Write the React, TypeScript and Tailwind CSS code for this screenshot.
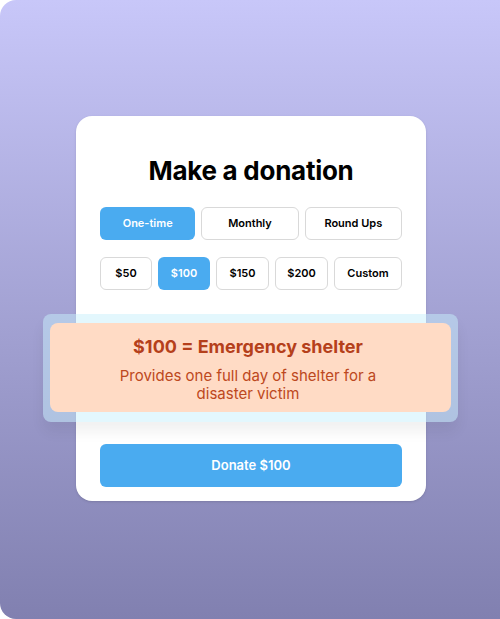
const frequencies = ["One-time", "Monthly", "Round Ups"];
const amounts = [
  { label: "$50", w: "w-[52px]" },
  { label: "$100", w: "w-[52px]" },
  { label: "$150", w: "w-[53px]" },
  { label: "$200", w: "w-[53px]" },
  { label: "Custom", w: "flex-1" },
];

export default function App() {
  return (
    <div className="relative h-[619px] w-[500px] overflow-hidden bg-white font-['Inter','Noto_Sans',sans-serif]">
      <div className="h-full w-[540px] rounded-2xl bg-gradient-to-b from-[#c8c7f9] to-[#8180b0] pt-[116px] pl-[76px]">
        <div className="flex h-[385px] w-[350px] flex-col rounded-2xl bg-white px-6 pt-[38px] shadow-sm">
          <h1 className="text-center text-[26px] font-bold leading-[33px] tracking-[-0.01em] text-black">
            Make a donation
          </h1>
          <div className="mt-[20px] flex gap-[6px]">
            {frequencies.map((f, i) => (
              <button
                key={f}
                className={
                  i === 0
                    ? "h-[33px] flex-1 rounded-md bg-[#4aabf0] text-[11px] font-semibold text-white"
                    : "h-[33px] flex-1 rounded-md border border-[#d9d9d9] bg-white text-[11px] font-semibold text-black"
                }
              >
                {f}
              </button>
            ))}
          </div>
          <div className="mt-[17px] flex gap-[6px]">
            {amounts.map((a) => (
              <button
                key={a.label}
                className={
                  a.label === "$100"
                    ? `h-[33px] ${a.w} rounded-md bg-[#4aabf0] text-[11px] font-semibold text-white`
                    : `h-[33px] ${a.w} rounded-md border border-[#d9d9d9] bg-white text-[11px] font-semibold text-black`
                }
              >
                {a.label}
              </button>
            ))}
          </div>
          <div className="mt-[154px] flex h-[43px] items-center justify-center rounded-md bg-[#4aabf0] pt-[1px] text-[13px] font-semibold text-white">
            Donate $100
          </div>
        </div>
      </div>

      <div className="absolute left-[43px] top-[314px] h-[108px] w-[415px] rounded-lg bg-[#c8f0fb]/50 px-[7px] pt-[9px] shadow-[0_10px_14px_rgba(0,0,0,0.06)]">
        <div className="flex h-[89px] flex-col items-center rounded-lg bg-[#ffdbc5] pr-[5px] pt-[13px] text-center text-[#b5401b]">
          <p className="text-[18px] font-bold leading-[22px]">$100 = Emergency shelter</p>
          <p className="mt-[9px] w-[280px] text-[15px] leading-[18px] text-[#bd4820]">
            Provides one full day of shelter for a disaster victim
          </p>
        </div>
      </div>
    </div>
  );
}
